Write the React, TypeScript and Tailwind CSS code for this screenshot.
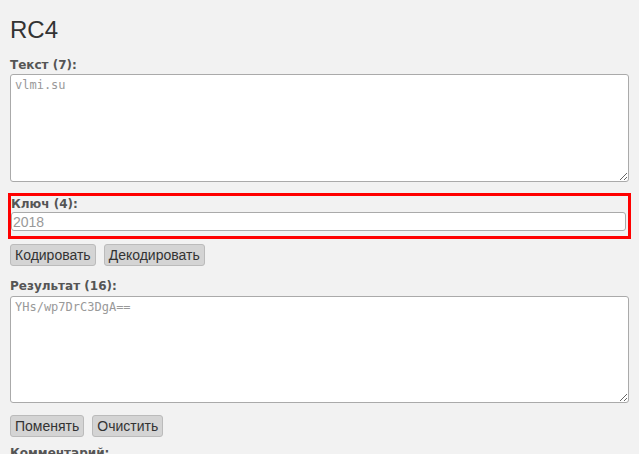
export default function App() {
  return (
    <div className="min-h-screen bg-[#f2f2f2] px-[10px] pt-[13px] font-['Liberation_Sans',Arial,sans-serif] text-[#333]">
      <h1 className="text-[24px] leading-[34px] text-[#333] mb-[10px]">RC4</h1>

      <label className="block font-['DejaVu_Sans',Verdana,sans-serif] text-[12px] font-bold leading-[16px] text-[#555]">
        Текст (7):
      </label>
      <textarea
        placeholder="vlmi.su"
        className="block w-[619px] h-[108px] mt-[1px] bg-white border border-[#aaa] rounded-[3px] px-[4px] py-[1px] font-['DejaVu_Sans_Mono',monospace] text-[12px] leading-[18px] placeholder:text-[#999] resize-y"
      />

      <div className="mt-[11px] -ml-[2px] w-[623px] border-[3px] border-[#ff0000] pb-[5px]">
        <label className="block font-['DejaVu_Sans',Verdana,sans-serif] text-[12px] font-bold leading-[16px] text-[#555]">
          Ключ (4):
        </label>
        <input
          placeholder="2018"
          className="block w-[615px] h-[19px] bg-white border border-[#aaa] rounded-[3px] px-[1px] text-[14px] leading-[17px] placeholder:text-[#999]"
        />
      </div>

      <div className="flex gap-[8px] mt-[5px]">
        <button className="h-[22px] px-[4px] bg-[#d4d4d4] border border-[#bbb] rounded-[3px] text-[14px] leading-[20px] text-[#333]">
          Кодировать
        </button>
        <button className="h-[22px] px-[4px] bg-[#d4d4d4] border border-[#bbb] rounded-[3px] text-[14px] leading-[20px] text-[#333]">
          Декодировать
        </button>
      </div>

      <label className="block mt-[12px] font-['DejaVu_Sans',Verdana,sans-serif] text-[12px] font-bold leading-[16px] text-[#555]">
        Результат (16):
      </label>
      <textarea
        placeholder="YHs/wp7DrC3DgA=="
        className="block w-[619px] h-[107px] mt-[2px] bg-white border border-[#aaa] rounded-[3px] px-[4px] py-[1px] font-['DejaVu_Sans_Mono',monospace] text-[12px] leading-[18px] placeholder:text-[#999] resize-y"
      />

      <div className="flex gap-[8px] mt-[12px]">
        <button className="h-[22px] px-[4px] bg-[#d4d4d4] border border-[#bbb] rounded-[3px] text-[14px] leading-[20px] text-[#333]">
          Поменять
        </button>
        <button className="h-[22px] px-[4px] bg-[#d4d4d4] border border-[#bbb] rounded-[3px] text-[14px] leading-[20px] text-[#333]">
          Очистить
        </button>
      </div>

      <label className="block mt-[8px] font-['DejaVu_Sans',Verdana,sans-serif] text-[12px] font-bold leading-[16px] text-[#555]">
        Комментарий:
      </label>
    </div>
  );
}
